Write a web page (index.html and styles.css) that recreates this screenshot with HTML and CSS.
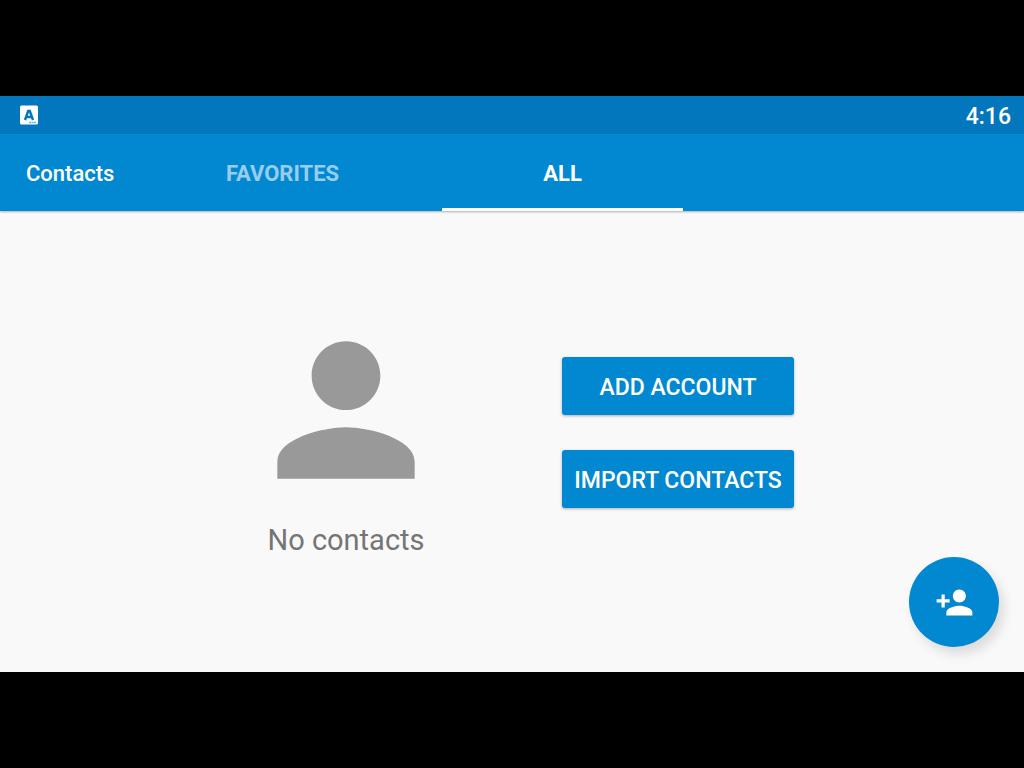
FILE: index.html
```html
<!DOCTYPE html>
<html lang="en">
<head>
    <meta charset="UTF-8">
    <meta name="viewport" content="width=device-width, initial-scale=1.0">
    <title>Contacts</title>
    <link rel="stylesheet" href="styles.css">
</head>
<body>
    <div class="screen">
        <div class="status-bar">
            <svg class="status-icon" viewBox="0 0 18 20" aria-hidden="true">
                <rect y="0.5" width="18" height="19" rx="1.5" fill="#fff"/>
                <path d="M5 15 8.200 6h1.600L13 15M6.500 12h5" fill="none" stroke="#0277bd" stroke-width="2.400"/>
                <path d="M9 17.500h7" stroke="#6db3dc" stroke-width="1.500" stroke-dasharray="2 .5"/>
            </svg>
            <time class="clock">4:16</time>
        </div>

        <header class="toolbar">
            <h1 class="title">Contacts</h1>
            <div class="tabs" role="tablist">
                <button class="tab" role="tab" aria-selected="false">FAVORITES</button>
                <button class="tab active" role="tab" aria-selected="true">ALL</button>
            </div>
        </header>

        <main class="content">
            <div class="empty">
                <svg class="empty-icon" viewBox="0 0 24 24" aria-hidden="true">
                    <path d="M12 12c2.210 0 4-1.790 4-4s-1.790-4-4-4-4 1.790-4 4 1.790 4 4 4zm0 2c-2.670 0-8 1.340-8 4v2h16v-2c0-2.660-5.330-4-8-4z"/>
                </svg>
                <p class="empty-text">No contacts</p>
            </div>
            <div class="actions">
                <button class="action">ADD ACCOUNT</button>
                <button class="action">IMPORT CONTACTS</button>
            </div>
        </main>

        <button class="fab" aria-label="Create new contact">
            <svg class="fab-icon" viewBox="0 0 24 24" aria-hidden="true">
                <path d="M15 12c2.210 0 4-1.790 4-4s-1.790-4-4-4-4 1.790-4 4 1.790 4 4 4zm-9-2V7H4v3H1v2h3v3h2v-3h3v-2H6zm9 4c-2.670 0-8 1.340-8 4v2h16v-2c0-2.660-5.330-4-8-4z"/>
            </svg>
        </button>
    </div>
</body>
</html>
```

FILE: styles.css
```css
:root {
    --primary: #0288d1;
    --primary-dark: #0277bd;
}

* {
    box-sizing: border-box;
}

body {
    margin: 0;
    min-height: 100vh;
    display: flex;
    align-items: center;
    background: #000;
    font-family: Roboto, sans-serif;
}

button {
    border: none;
    padding: 0;
    font: inherit;
    cursor: pointer;
}

.screen {
    position: relative;
    display: flex;
    flex-direction: column;
    width: 100%;
    aspect-ratio: 16 / 9;
    overflow: hidden;
    background: #f9f9f9;
}

.status-bar {
    display: flex;
    align-items: center;
    justify-content: space-between;
    height: 38px;
    padding: 0 13px 0 20px;
    background: var(--primary-dark);
}

.status-icon {
    width: 18px;
    height: 20px;
}

.clock {
    padding-top: 2px;
    color: #fff;
    font-size: 23px;
    font-weight: 500;
}

.toolbar {
    display: flex;
    align-items: center;
    height: 77px;
    padding-left: 26px;
    background: var(--primary);
    box-shadow: 0 1px 2px rgba(0, 0, 0, 0.3);
    color: #fff;
}

.title {
    width: 136px;
    margin: 0;
    padding-top: 2px;
    font-size: 22px;
    font-weight: 500;
}

.tabs {
    display: flex;
    gap: 39px;
    height: 100%;
}

.tab {
    width: 241px;
    padding-top: 5px;
    border-bottom: 3px solid transparent;
    background: none;
    color: rgba(255, 255, 255, 0.6);
    font-size: 22px;
    font-weight: 700;
}

.tab.active {
    border-bottom-color: #fff;
    color: #fff;
}

.content {
    flex: 1;
    display: flex;
    align-items: center;
    justify-content: center;
    padding-bottom: 18px;
}

.empty,
.actions {
    display: flex;
    flex-direction: column;
    align-items: center;
    width: 332px;
}

.empty {
    padding-bottom: 2px;
}

.empty-icon {
    width: 206px;
    height: 206px;
    fill: #999;
}

.empty-text {
    margin: 10px 0 0;
    color: #757575;
    font-size: 29px;
    line-height: 34px;
}

.actions {
    gap: 35px;
}

.action {
    width: 232px;
    height: 58px;
    padding-top: 2px;
    border-radius: 3px;
    background: var(--primary);
    box-shadow: 0 1px 3px rgba(0, 0, 0, 0.3);
    color: #fff;
    font-size: 23px;
    font-weight: 500;
    white-space: nowrap;
}

.fab {
    position: absolute;
    right: 25px;
    bottom: 25px;
    display: flex;
    align-items: center;
    justify-content: center;
    width: 90px;
    height: 90px;
    border-radius: 50%;
    background: var(--primary);
    box-shadow: 5px 7px 12px rgba(0, 0, 0, 0.12);
}

.fab-icon {
    width: 39px;
    height: 39px;
    fill: #fff;
}
```
